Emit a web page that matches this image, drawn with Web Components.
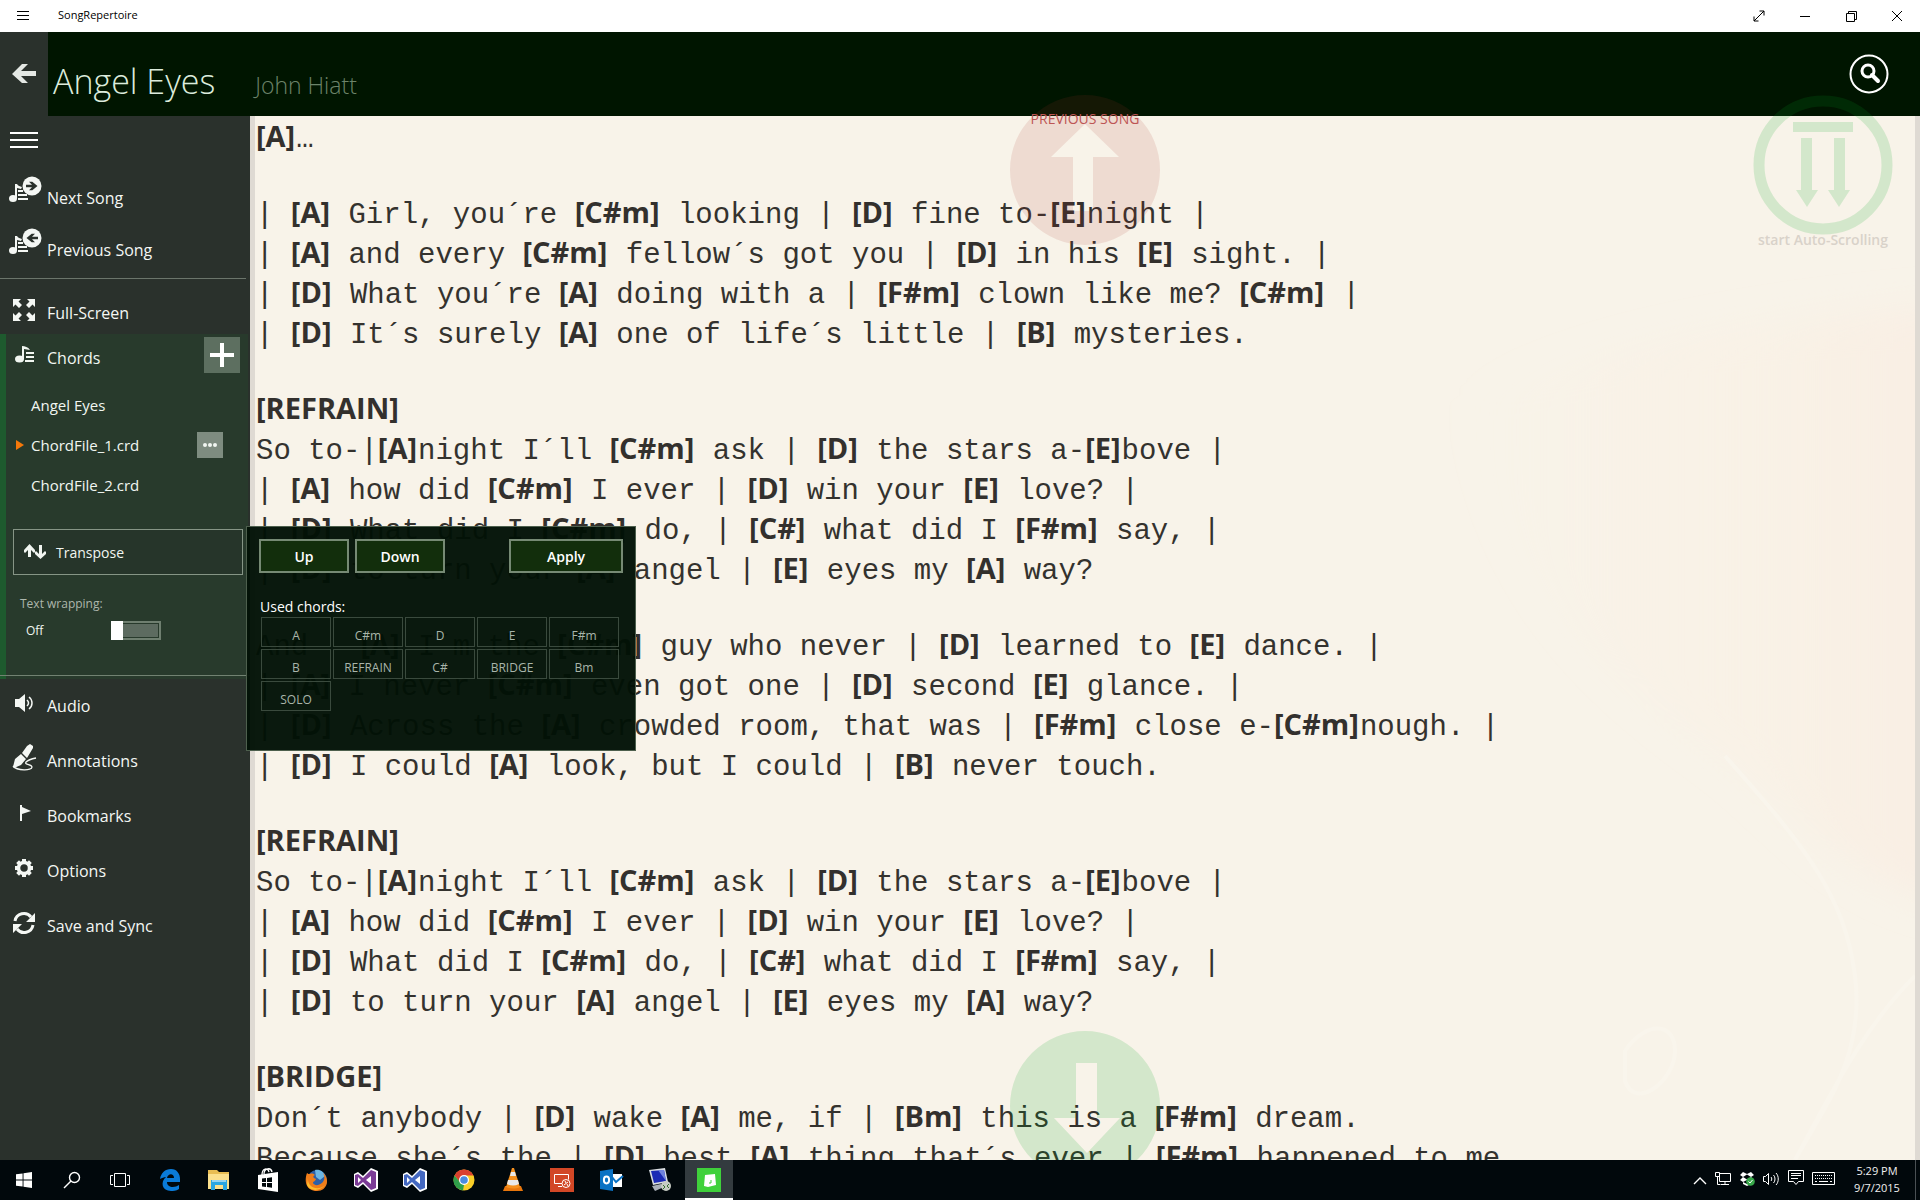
<!DOCTYPE html>
<html lang="en">
<head>
<meta charset="utf-8">
<title>SongRepertoire</title>
<style>
  html, body { height: 100%; margin: 0; }
  body {
    display: flex;
    flex-direction: column;
    overflow: hidden;
    background: #f8f3e9;
    font-family: "Open Sans", "Noto Sans", sans-serif;
    font-size: 16px;
    --panel: #2a312c;
    --header: #001500;
    --paper: #f8f3e9;
    --edge: #dfdad3;
  }
  main { display: flex; flex: 1; min-height: 0; }
</style>
</head>
<body>

<window-bar>SongRepertoire</window-bar>
<song-header>
  <span slot="title">Angel Eyes</span>
  <span slot="artist">John Hiatt</span>
</song-header>
<main>
  <side-menu>
    <nav-item icon="next" tall>Next Song</nav-item>
    <nav-item icon="previous" tall>Previous Song</nav-item>
    <nav-item slot="view" icon="fullscreen">Full-Screen</nav-item>
    <chord-panel slot="chords"></chord-panel>
    <nav-item slot="tools" icon="audio">Audio</nav-item>
    <nav-item slot="tools" icon="pen">Annotations</nav-item>
    <nav-item slot="tools" icon="flag">Bookmarks</nav-item>
    <nav-item slot="tools" icon="gear">Options</nav-item>
    <nav-item slot="tools" icon="sync">Save and Sync</nav-item>
  </side-menu>
  <song-sheet></song-sheet>
</main>
<task-bar></task-bar>

<script>
const SONG = '<ellipse cx="7" cy="21.5" rx="4" ry="3.500"/><path d="M9 7h2c1 2 3 2 5 3l-1 2-4-1v10H9zM12 13h5v2h-5zm0 4h9v2h-9zm0 4h10v2H12z"/><circle cx="26" cy="9" r="9.500"/>';

// name: [width, height, markup]
const ICONS = {
  menu: [12, 12, '<path d="M0 1.500h12M0 5.500h12M0 9.500h12" stroke="currentColor"/>'],
  burger: [28, 16, '<path d="M0 1h28M0 8h28M0 15h28" stroke="currentColor" stroke-width="2"/>'],
  back: [24, 20, '<path d="M0 10 10 0h6L9 7h15v5H9l7 7h-6z"/>'],
  search: [40, 40, '<g fill="none" stroke="currentColor"><circle cx="20" cy="20" r="18.500" stroke-width="2"/><circle cx="19" cy="17" r="6" stroke-width="3"/><path d="m23 21 6 6" stroke-width="4" stroke-linecap="round"/></g>'],
  expand: [12, 12, '<path d="M1 11 11 1M6.500 1H11v4.500M1 6.500V11h4.500" fill="none" stroke="currentColor"/>'],
  minimize: [10, 10, '<path d="M0 5.500h10" stroke="currentColor"/>'],
  restore: [11, 11, '<path d="M.5 2.500h8v8h-8zM2.500 2.500v-2h8v8h-2" fill="none" stroke="currentColor"/>'],
  close: [12, 12, '<path d="m1 1 10 10M11 1 1 11" stroke="currentColor"/>'],
  next: [36, 36, SONG + '<path d="M20 7.800v2.400h6l-3 3h3.300L31.500 9l-5.200-4.200H23l3 3z" fill="#2a312c"/>'],
  previous: [36, 36, SONG + '<path d="M32 7.800v2.400h-6l3 3h-3.300L20.500 9l5.200-4.200H29l-3 3z" fill="#2a312c"/>'],
  fullscreen: [22, 22, '<path d="M0 0h8L5.500 2.500 9 6 6 9 2.500 5.500 0 8zM22 0v8l-2.500-2.500L16 9l-3-3 3.500-3.500L14 0zM0 22v-8l2.500 2.500L6 13l3 3-3.500 3.500L8 22zM22 22h-8l2.500-2.500L13 16l3-3 3.500 3.500L22 14z"/>'],
  chords: [20, 18, '<ellipse cx="4.500" cy="13" rx="4.500" ry="3.500"/><path d="M7 0c3 0 6 1 8 4l-6-1v10H7zM11 6h8v2h-8zm0 4h8v2h-8zm-1 4h9v2h-9z"/>'],
  plus: [24, 24, '<path d="M10 0h4v10h10v4H14v10h-4V14H0v-4h10z"/>'],
  more: [14, 6, '<circle cx="2" cy="3" r="2"/><circle cx="7" cy="3" r="2"/><circle cx="12" cy="3" r="2"/>'],
  transpose: [22, 16, '<path d="M4 13V6L1 9 0 8V6l5.500-6L11 6v2l-1 1-3-3v7zM15 1v9l-3-3-1 1v2l5.500 5L22 10V8l-1-1-3 3V1z"/>'],
  audio: [18, 18, '<path d="M0 5h4l6-5v18l-6-5H0z"/><path d="M12 6c2 2 2 4 0 6M14 3c4 3 4 9 0 12" fill="none" stroke="currentColor" stroke-width="1.500"/>'],
  pen: [24, 28, '<path d="m1 23 2-8 6-5 5 5-5 6-7 3zM10 9l5-7 3-2 3 2v2l-6 10z"/><path d="M1 22c4 5 19 5 19 1 0-3-8-2-6-5 2-2 5-3 10-4" fill="none" stroke="currentColor" stroke-width="1.300"/>'],
  flag: [10, 16, '<path d="M1 0h2v2l9 4-9 3v7H1z"/>'],
  gear: [18, 18, '<circle cx="9" cy="9" r="5.500" fill="none" stroke="currentColor" stroke-width="3.500"/><path d="M9 0v3M9 15v3M0 9h3M15 9h3M2.600 2.600l2.200 2.200M13.200 13.200l2.200 2.200M15.400 2.600l-2.200 2.200M2.600 15.400l2.200-2.200" stroke="currentColor" stroke-width="4"/>'],
  sync: [22, 22, '<path d="M2 9a9 9 0 0 1 16-4M20 13a9 9 0 0 1-16 4" fill="none" stroke="currentColor" stroke-width="3"/><path d="M22 1v9h-9zM0 21v-9h9z"/>'],

  start: [16, 16, '<path d="M0 2.300 6.600 1.400v6.200H0zM7.500 1.200 16 0v7.600H7.500zM0 8.400h6.600v6.200L0 13.700zM7.500 8.400H16V16l-8.500-1.200z"/>'],
  find: [18, 18, '<g fill="none" stroke="currentColor" stroke-width="1.400"><circle cx="11.500" cy="6.500" r="5"/><path d="M8 10 1 17"/></g>'],
  taskview: [20, 14, '<path d="M4.500.5h11v13h-11zM3 2.500H.5v9H3M17 2.500h2.500v9H17" fill="none" stroke="currentColor"/>'],
  edge: [20, 22, '<path fill="#0a7bd8" d="M0 10C1 4 5 0 11 0c6 0 9 5 9 10v3H7c0 6 8 6 12 3v4c-3 2-6 2-8 2-9 0-11-9-5-14-2 0-4 1-6 2zm7-1h7c0-5-6-5-7 0z"/>'],
  explorer: [24, 20, '<path fill="#e8bd53" d="M1 0h9l2 2h10v17H1z"/><path fill="#fbe08d" d="M1 4h21v15H1z"/><path fill="#2aa6e2" d="M4 10h16v10h-4v-5H8v5H4z"/><path fill="#fff" opacity=".5" d="M5 10h14v2H5z"/>'],
  store: [22, 24, '<path d="M7 6c0-6 7-7 8-2M5 7c0-7 6-8 7-3" fill="none" stroke="currentColor" stroke-width="1.300"/><path d="M1 7 21 4v20L1 21z"/><path fill="#01080c" d="m5 10.500 4-.5v4H5zM10 9.900l5-.7V14h-5zM5 15h4v4l-4-.5zM10 15h5v4.800l-5-.7z"/>'],
  firefox: [24, 24, '<circle cx="12" cy="12" r="10" fill="#2c5fa8"/><path fill="#6cb6e4" d="M10 2c5-1 9 2 10 6l-5 4-4-3z"/><path fill="#ef7d1a" d="M2 5c1 1 2 1 3 1 2-1 4 0 5 1-2 1-2 2-1 3l2 1c-1 3-3 2-3 4 2 4 9 2 11-3 1-3 0-5-1-7 7 5 5 18-6 18C1 23-1 13 2 5z"/><path fill="#fdbb2c" d="M3 10c-1 9 10 14 17 7-4 6-15 7-18 0z"/>'],
  vs: [24, 24, '<path fill="#fff" d="M17 0l7 3v18l-7 3-8-8-5 4-4-2V6l4-2 5 4z"/><path fill="#7b3b96" d="m17 2 5 2v16l-5 2-8-8-5 4-3-1V7l3-1 5 4zM17 8l-5 4 5 4zM4 9v6l3-3z"/>'],
  vsblue: [24, 24, '<path fill="#fff" d="M17 0l7 3v18l-7 3-8-8-5 4-4-2V6l4-2 5 4z"/><path fill="#4468c1" d="m17 2 5 2v16l-5 2-8-8-5 4-3-1V7l3-1 5 4zM17 8l-5 4 5 4zM4 9v6l3-3z"/>'],
  chrome: [22, 22, '<circle cx="11" cy="11" r="10.500" fill="#f9ce27"/><path fill="#d9402f" d="M1.500 6.500A10.500 10.500 0 0 1 20.500 6.500H11L7 13z"/><path fill="#2f9e4a" d="M1.500 6.500 7 13l4 3-1 5.500A10.500 10.500 0 0 1 1.500 6.500z"/><circle cx="11" cy="11" r="5" fill="#fff"/><circle cx="11" cy="11" r="3.800" fill="#4a8be0"/>'],
  vlc: [20, 24, '<path fill="#e8760c" d="M2 18h16l2 5H0z"/><path fill="#f5901e" d="M9 0h2l6 19c-4 2-10 2-14 0z"/><path fill="#e9e9e9" d="M8 4h4l1 4H7zM5 12h10l1 4c-4 2-8 2-12 0z"/>'],
  rdp: [24, 24, '<path fill="#d24726" d="M0 0h24v24H0z"/><g fill="none" stroke="#fff"><path d="M12 15.500H4.500v-9h14v5M8 18.500h4"/><circle cx="16" cy="15.500" r="4"/><path d="m14 17 4-3m-3-1 1 2m1 1 1 2"/></g>'],
  outlook: [22, 22, '<path fill="#fff" d="M10 5h12v13H10z"/><path fill="none" stroke="#0a72c4" stroke-width="2" d="m12 8 4 5 7-6"/><path fill="#0a72c4" d="m0 2 13-2v22L0 20z"/><ellipse cx="6.500" cy="11" rx="2.600" ry="3.400" fill="none" stroke="#fff" stroke-width="2"/>'],
  remote: [24, 24, '<path fill="#d9dde2" d="m1 2 16-2 3 14-15 3z"/><path fill="#1c2bb5" d="m3 3 13-1 2 11-12 2z"/><path fill="#6f82dd" d="m10 2 6 0 2 11z"/><path fill="#aab0b8" d="m4 18 9-2 3 3-9 4z"/><circle cx="18" cy="18" r="5" fill="#c7ccc4"/><path d="m15 17 2 2-2 2m6-5-2 2 2 2" fill="none" stroke="#35702e"/>'],
  songapp: [24, 24, '<path fill="#3fd13b" d="M0 0h24v24H0z"/><path fill="#fff" d="m8 7 10-1 1 11-8 2-4-1z"/><path stroke="#3fd13b" fill="none" d="M14 12v3h-2"/>'],
  chevron: [14, 10, '<path d="m1 8 6-6 6 6" fill="none" stroke="currentColor" stroke-width="1.400"/>'],
  network: [16, 14, '<path d="M4.500 1.500h11v8h-11zM10 9.500v3M6 12.500h8M.5.500h4v4h-4zM2.500 4.500v8h3" fill="none" stroke="currentColor"/>'],
  dropbox: [16, 14, '<path d="m4 0 4 2 4-2 3 3-3 2 3 3-3 2-4-2-4 2-3-2 3-3-3-2z"/><path d="M4 10l4 2 4-2v2l-4 2-4-2z"/><path d="M4 5l4-2.500L12 5 8 7.500z" fill="#01080c"/><circle cx="11.500" cy="9.500" r="4.300" fill="#37a84a"/><path d="m9.500 9.500 1.500 1.500 2.500-3" fill="none" stroke="#fff"/>'],
  volume: [17, 14, '<path d="M.5 4.500h2l3-3v11l-3-3h-2zM8 5c1 1 1 3 0 4M10.500 3c2 2 2 6 0 8M13 1c3 3 3 9 0 12" fill="none" stroke="currentColor"/>'],
  notes: [16, 16, '<path d="M.5.500h15v11h-5l-2.500 3-2.500-3h-5zM3 3.500h10M3 5.500h10M3 8.500h7" fill="none" stroke="currentColor"/>'],
  keyboard: [23, 14, '<path d="M.5.500h22v12H.500z" fill="none" stroke="currentColor"/><path d="M3 3.500h18M3 6.500h18" stroke="currentColor" stroke-dasharray="1 1"/><path d="M3 9.500h2M7 9.500h9M18 9.500h2" stroke="currentColor"/>']
};

class AppIcon extends HTMLElement {
  connectedCallback() {
    const [w, h, markup] = ICONS[this.getAttribute('name')];
    if (!this.shadowRoot) this.attachShadow({ mode: 'open' });
    this.shadowRoot.innerHTML = `
      <style>
        :host { display: inline-flex; flex: none; }
        svg { display: block; overflow: visible; fill: currentColor; }
      </style>
      <svg width="${w}" height="${h}" viewBox="0 0 ${w} ${h}" aria-hidden="true">${markup}</svg>
    `;
  }
}
customElements.define('app-icon', AppIcon);


// Shared setup: subclasses only return their markup
class View extends HTMLElement {
  connectedCallback() {
    if (this.shadowRoot) return;
    this.attachShadow({ mode: 'open' });
    this.shadowRoot.innerHTML = `
      <style>
        * { box-sizing: border-box; }
        button { all: unset; box-sizing: border-box; cursor: pointer; }
        button:focus-visible { outline: 2px solid #8fb08f; }
      </style>
      ${this.render()}
    `;
  }
}


class WindowBar extends View {
  render() {
    return `
      <style>
        :host { display: flex; align-items: center; height: 32px; background: #fff; color: #000; font-size: 11px; }
        .menu { display: flex; justify-content: center; width: 46px; }
        .name { flex: 1; padding-left: 12px; line-height: 18px; padding-bottom: 2px; }
        .controls { display: flex; }
        .controls button { display: flex; align-items: center; justify-content: center; width: 46px; height: 32px; }
      </style>
      <button class="menu" aria-label="Menu"><app-icon name="menu"></app-icon></button>
      <div class="name"><slot></slot></div>
      <div class="controls">
        <button aria-label="Full screen"><app-icon name="expand"></app-icon></button>
        <button aria-label="Minimize"><app-icon name="minimize"></app-icon></button>
        <button aria-label="Restore"><app-icon name="restore"></app-icon></button>
        <button aria-label="Close"><app-icon name="close"></app-icon></button>
      </div>
    `;
  }
}
customElements.define('window-bar', WindowBar);


class SongHeader extends View {
  render() {
    return `
      <style>
        :host { display: flex; height: 84px; background: var(--header); font-weight: 300; }
        .back { display: flex; align-items: center; justify-content: center; width: 48px; background: var(--panel); color: #e4e8e4; }
        .names { display: flex; flex: 1; align-items: baseline; gap: 40px; padding: 25px 0 0 5px; line-height: 48px; }
        h1 { margin: 0; font-size: 34px; font-weight: 300; color: #dcebdc; }
        p { margin: 0; font-size: 23px; color: #6c836a; }
        .search { display: flex; align-items: center; margin-right: 31px; color: #fff; }
      </style>
      <button class="back" aria-label="Back"><app-icon name="back"></app-icon></button>
      <div class="names">
        <h1><slot name="title"></slot></h1>
        <p><slot name="artist"></slot></p>
      </div>
      <button class="search" aria-label="Search"><app-icon name="search"></app-icon></button>
    `;
  }
}
customElements.define('song-header', SongHeader);


class NavItem extends View {
  render() {
    return `
      <style>
        :host { display: block; }
        button { display: flex; align-items: center; width: 100%; height: 46px; color: #f4f7f4; }
        :host([tall]) button { height: 52px; }
        app-icon { justify-content: center; width: 47px; }
        span { padding-top: 6px; line-height: 24px; }
      </style>
      <button><app-icon name="${this.getAttribute('icon')}"></app-icon><span><slot></slot></span></button>
    `;
  }
}
customElements.define('nav-item', NavItem);


class SideMenu extends View {
  render() {
    return `
      <style>
        :host { display: block; position: relative; z-index: 2; flex: none; width: 250px; background: var(--panel); }
        .burger { display: flex; align-items: center; height: 47px; margin: 0 0 6px 10px; color: #fff; }
        hr { height: 1px; margin: 5px 4px 0 0; border: 0; background: #6b756b; }
        .view { padding: 8px 0 1px; }
        .tools { display: flex; flex-direction: column; gap: 9px; padding-top: 1px; }
      </style>
      <button class="burger" aria-label="Toggle menu"><app-icon name="burger"></app-icon></button>
      <nav>
        <slot></slot>
        <hr>
        <div class="view"><slot name="view"></slot></div>
        <slot name="chords"></slot>
        <div class="tools"><slot name="tools"></slot></div>
      </nav>
    `;
  }
}
customElements.define('side-menu', SideMenu);


class ChordPanel extends View {
  render() {
    return `
      <style>
        :host { display: block; margin-right: 2px; padding-bottom: 3px; border-left: 6px solid #1e5a2e; background: #283a2c; color: #f1f6f1; }
        .head { display: flex; align-items: center; height: 42px; margin-bottom: 9px; padding: 0 8px 0 9px; }
        .head span { flex: 1; padding: 6px 0 0 12px; line-height: 24px; }
        .add, .more { display: flex; align-items: center; justify-content: center; background: #5d6f60; }
        .add { width: 36px; height: 36px; color: #fff; }
        .more { width: 26px; height: 26px; background: #7e8c80; }
        ul { margin: 0; padding: 0; list-style: none; font-size: 15px; }
        li { display: flex; align-items: center; justify-content: space-between; height: 40px; padding: 0 25px; }
        li[aria-current] { padding-left: 10px; }
        li[aria-current] a { flex: 1; }
        li[aria-current]::before { content: ""; width: 0; margin-right: 7px; border: 5px solid transparent; border-left: 8px solid #f5780a; border-right: 0; }
        a { color: inherit; text-decoration: none; }
        .transpose { position: relative; height: 46px; margin: 24px 5px 0 7px; }
        .transpose > button { display: flex; align-items: center; gap: 10px; width: 100%; height: 46px; padding-left: 10px; border: 1px solid #869586; background: #26352a; font-size: 14px; }
        transpose-flyout { position: absolute; left: calc(100% + 3px); top: -3px; }
        .wrap { margin: 18px 0 33px 14px; font-size: 12px; }
        .wrap label { display: block; line-height: 22px; color: #adb7ad; }
        .state { display: flex; align-items: center; height: 24px; margin-top: 3px; padding-left: 6px; }
        .state span { width: 85px; }
        input {
          appearance: none;
          width: 50px;
          height: 19px;
          margin: 0;
          background:
            linear-gradient(#fff, #fff) 0 0 / 12px 100% no-repeat,
            linear-gradient(#5d6b60, #5d6b60) center / calc(100% - 6px) calc(100% - 6px) no-repeat,
            linear-gradient(#283a2c, #283a2c) center / calc(100% - 4px) calc(100% - 4px) no-repeat,
            #6f7f70;
        }
        input:checked { background-position: 100% 0, center, center; }
        hr { height: 1px; margin: 0 -2px 0 -6px; border: 0; background: #728272; }
      </style>
      <div class="head">
        <app-icon name="chords"></app-icon><span>Chords</span>
        <button class="add" aria-label="Add chord file"><app-icon name="plus"></app-icon></button>
      </div>
      <ul>
        <li><a href="#song">Angel Eyes</a></li>
        <li aria-current="true"><a href="#file1">ChordFile_1.crd</a><button class="more" aria-label="More"><app-icon name="more"></app-icon></button></li>
        <li><a href="#file2">ChordFile_2.crd</a></li>
      </ul>
      <div class="transpose">
        <button><app-icon name="transpose"></app-icon>Transpose</button>
        <transpose-flyout></transpose-flyout>
      </div>
      <div class="wrap">
        <label for="wrapping">Text wrapping:</label>
        <div class="state"><span>Off</span><input type="checkbox" role="switch" id="wrapping"></div>
      </div>
      <hr>
    `;
  }

  connectedCallback() {
    super.connectedCallback();
    const state = this.shadowRoot.querySelector('.state span');
    this.shadowRoot.querySelector('input').addEventListener('change', e => {
      state.textContent = e.target.checked ? 'On' : 'Off';
    });
  }
}
customElements.define('chord-panel', ChordPanel);


class TransposeFlyout extends View {
  render() {
    const chords = ['A', 'C#m', 'D', 'E', 'F#m', 'B', 'REFRAIN', 'C#', 'BRIDGE', 'Bm', 'SOLO'];
    return `
      <style>
        :host { display: block; box-sizing: border-box; width: 390px; padding: 12px 12px 39px; border: 1px solid #4d5f4d; background: rgba(2, 18, 6, .97); color: #fff; }
        .actions { display: flex; gap: 6px; }
        .actions button { width: 90px; height: 34px; border: 2px solid #768a74; background: #122e0c; font-size: 14px; font-weight: 600; text-align: center; }
        .actions .apply { width: 114px; margin-left: auto; }
        h2 { margin: 24px 0 0 1px; font-size: 14px; font-weight: 400; line-height: 20px; }
        .chords { display: grid; grid-template-columns: repeat(5, 70px); gap: 2px; padding-left: 2px; }
        .chords button { height: 30px; padding-top: 7px; border: 1px solid #3a4a3d; color: #a9b5aa; font-size: 12px; line-height: 21px; text-align: center; }
      </style>
      <div class="actions">
        <button>Up</button><button>Down</button><button class="apply">Apply</button>
      </div>
      <h2>Used chords:</h2>
      <div class="chords">${chords.map(c => `<button>${c}</button>`).join('')}</div>
    `;
  }
}
customElements.define('transpose-flyout', TransposeFlyout);


const LYRICS = `[A]…

| [A] Girl, you´re [C#m] looking | [D] fine to-[E]night |
| [A] and every [C#m] fellow´s got you | [D] in his [E] sight. |
| [D] What you´re [A] doing with a | [F#m] clown like me? [C#m] |
| [D] It´s surely [A] one of life´s little | [B] mysteries.

[REFRAIN]
So to-|[A]night I´ll [C#m] ask | [D] the stars a-[E]bove |
| [A] how did [C#m] I ever | [D] win your [E] love? |
| [D] What did I [C#m] do, | [C#] what did I [F#m] say, |
| [D] to turn your [A] angel | [E] eyes my [A] way?

And   [A] I´m the [C#m] guy who never | [D] learned to [E] dance. |
| [A] I never [C#m] even got one | [D] second [E] glance. |
| [D] Across the [A] crowded room, that was | [F#m] close e-[C#m]nough. |
| [D] I could [A] look, but I could | [B] never touch.

[REFRAIN]
So to-|[A]night I´ll [C#m] ask | [D] the stars a-[E]bove |
| [A] how did [C#m] I ever | [D] win your [E] love? |
| [D] What did I [C#m] do, | [C#] what did I [F#m] say, |
| [D] to turn your [A] angel | [E] eyes my [A] way?

[BRIDGE]
Don´t anybody | [D] wake [A] me, if | [Bm] this is a [F#m] dream.
Because she´s the | [D] best [A] thing that´s ever | [F#m] happened to me`;

class SongSheet extends View {
  // Everything in square brackets is a chord or a section name
  lines() {
    return LYRICS.split('\n').map(line =>
      `<div class="line">${line.replace(/\[[^\]]+\]/g, '<b>$&</b>')}</div>`
    ).join('');
  }

  render() {
    return `
      <style>
        :host { display: block; position: relative; flex: 1; min-width: 0; }
        .page {
          position: relative;
          height: 100%;
          overflow: hidden;
          padding: 4px 0 0 1px;
          border: solid var(--edge);
          border-width: 0 5px;
          background: var(--paper);
        }
        .art { position: absolute; right: 0; top: 0; width: 50%; height: 100%; }
        .lyrics { position: relative; color: #34322e; font-family: "Liberation Mono", monospace; font-size: 29px; line-height: 40px; white-space: pre; }
        .line:empty { height: 36px; }
        b { padding-right: 1px; font-family: "Open Sans", "Noto Sans", sans-serif; font-weight: 700; line-height: 29px; color: #33302d; }
        .round { position: absolute; z-index: 1; display: block; }
        .up, .down { left: 50%; width: 150px; height: 150px; margin-left: -75px; }
        .up { top: -21px; color: rgba(171, 46, 45, .12); }
        .up span { position: absolute; top: 14px; left: 0; width: 100%; font-size: 14px; font-weight: 500; line-height: 20px; text-align: center; color: #bd5554; }
        .down { bottom: -21px; color: rgba(0, 170, 33, .15); }
        .auto { top: -21px; right: 19px; width: 156px; color: rgba(0, 170, 33, .15); text-align: center; }
        .auto span { display: block; margin-top: -5px; font-size: 14px; font-weight: 600; line-height: 20px; color: #d9d2c9; }
        .round svg { display: block; margin: auto; fill: currentColor; }
      </style>
      <div class="page">
        <svg class="art" viewBox="0 0 830 1044" preserveAspectRatio="none" aria-hidden="true">
          <defs>
            <linearGradient id="glow">
              <stop offset="0" stop-color="#faefe0" stop-opacity="0"/>
              <stop offset=".6" stop-color="#faefe2" stop-opacity=".4"/>
              <stop offset="1" stop-color="#f9ece2" stop-opacity=".8"/>
            </linearGradient>
            <filter id="soft"><feGaussianBlur stdDeviation="18"/></filter>
          </defs>
          <path d="M380 290C500 230 700 200 880 190V790C760 770 720 700 640 640 540 570 420 480 380 290z" fill="url(#glow)" filter="url(#soft)"/>
          <path d="M640 640c80 90 120 140 130 220s-30 130-60 184M830 860c-50 50-80 110-120 184M540 935c20-30 50-30 50 0s-40 60-50 30z" fill="none" stroke="#f9f5ec" stroke-width="4"/>
        </svg>
        <div class="lyrics">${this.lines()}</div>
      </div>
      <button class="round up" aria-label="Previous song">
        <svg width="150" height="150" viewBox="0 0 150 150"><path fill-rule="evenodd" d="M75 0a75 75 0 1 1 0 150 75 75 0 0 1 0-150zM75 29 41 62h22v54h20V62h26z"/></svg>
        <span>PREVIOUS SONG</span>
      </button>
      <button class="round auto">
        <svg width="140" height="140" viewBox="0 0 140 140"><circle cx="70" cy="70" r="64" fill="none" stroke="currentColor" stroke-width="11"/><path d="M40 27h60v10H40zM48 43h11v52h6l-11 17-11-17h5zM81 43h11v52h5l-11 17-11-17h6z"/></svg>
        <span>start Auto-Scrolling</span>
      </button>
      <button class="round down" aria-label="Next song">
        <svg width="150" height="150" viewBox="0 0 150 150"><path fill-rule="evenodd" d="M75 0a75 75 0 1 1 0 150 75 75 0 0 1 0-150zM66 32v55H44l33 35 33-35H87V32z"/></svg>
      </button>
    `;
  }
}
customElements.define('song-sheet', SongSheet);


class TaskBar extends View {
  render() {
    const button = (icon, cls = '') =>
      `<button class="${cls}" aria-label="${icon}"><app-icon name="${icon}"></app-icon></button>`;
    const apps = ['edge', 'explorer', 'store', 'firefox', 'vs', 'vsblue', 'chrome', 'vlc', 'rdp', 'outlook', 'remote'];
    const tray = ['chevron', 'network', 'dropbox', 'volume', 'notes', 'keyboard'];
    return `
      <style>
        :host { display: flex; position: relative; z-index: 3; height: 40px; background: #01080c; color: #fff; }
        .system, .apps, .tray { display: flex; }
        .apps { gap: 1px; margin-left: 2px; }
        .system button, .apps button { display: flex; align-items: center; justify-content: center; width: 48px; height: 40px; }
        .apps .active { border-top: 2px solid #333b3f; border-bottom: 2px solid #fff; background: #333b3f; }
        .tray { align-items: center; gap: 8px; margin-left: auto; }
        time { width: 54px; margin: 2px 11px 0 15px; font-size: 11px; line-height: 17px; text-align: center; color: #f0f0f0; }
        .desktop { width: 5px; border-left: 1px solid #4a5054; }
      </style>
      <div class="system">${['start', 'find', 'taskview'].map(i => button(i)).join('')}</div>
      <div class="apps">${apps.map(i => button(i)).join('')}${button('songapp', 'active')}</div>
      <div class="tray">${tray.map(i => button(i)).join('')}</div>
      <time datetime="2015-09-07T17:29">5:29 PM<br>9/7/2015</time>
      <button class="desktop" aria-label="Show desktop"></button>
    `;
  }
}
customElements.define('task-bar', TaskBar);
</script>
</body>
</html>
